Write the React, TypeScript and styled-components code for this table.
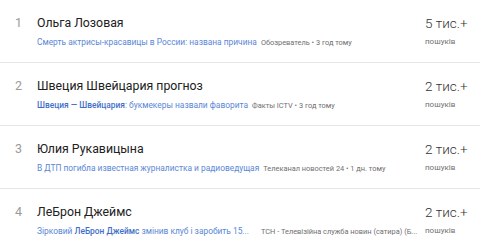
import { createGlobalStyle } from "styled-components";
import styled from "styled-components";

const GlobalStyle = createGlobalStyle`
  html, body {
    margin: 0;
    padding: 0;
    background: #ffffff;
  }
  body {
    font-family: Roboto, "Noto Sans", Arial, sans-serif;
    -webkit-font-smoothing: antialiased;
  }
`;

type Part = { text: string; bold?: boolean };

type Trend = {
  rank: number;
  title: string;
  snippet: Part[];
  source: string;
  count: string;
};

const trends: Trend[] = [
  {
    rank: 1,
    title: "Ольга Лозовая",
    snippet: [{ text: "Смерть актрисы-красавицы в России: названа причина" }],
    source: "Обозреватель • 3 год тому",
    count: "5 тис.+",
  },
  {
    rank: 2,
    title: "Швеция Швейцария прогноз",
    snippet: [
      { text: "Швеция — Швейцария", bold: true },
      { text: ": букмекеры назвали фаворита" },
    ],
    source: "Факты ICTV • 3 год тому",
    count: "2 тис.+",
  },
  {
    rank: 3,
    title: "Юлия Рукавицына",
    snippet: [{ text: "В ДТП погибла известная журналистка и радиоведущая" }],
    source: "Телеканал новостей 24 • 1 дн. тому",
    count: "2 тис.+",
  },
  {
    rank: 4,
    title: "ЛеБрон Джеймс",
    snippet: [
      { text: "Зірковий " },
      { text: "ЛеБрон Джеймс", bold: true },
      { text: " змінив клуб і заробить 15..." },
    ],
    source: "ТСН - Телевізійна служба новин (сатира) (Б...",
    count: "2 тис.+",
  },
];

const List = styled.div`
  display: flex;
  flex-direction: column;
  width: 480px;
`;

const Row = styled.div`
  display: flex;
  align-items: flex-start;
  height: 62px;
  border-bottom: 1px solid #e6e6e6;
  box-sizing: content-box;
`;

const Rank = styled.div`
  width: 22px;
  padding-left: 15px;
  padding-top: 14px;
  font-size: 12.5px;
  line-height: 18px;
  color: #9a9a9a;
  flex-shrink: 0;
`;

const Main = styled.div`
  flex: 1;
  min-width: 0;
  padding-top: 14px;
  padding-right: 2px;
  display: flex;
  flex-direction: column;
`;

const Title = styled.div`
  font-size: 12.3px;
  line-height: 18px;
  color: #212121;
`;

const SubLine = styled.div<{ $wide?: boolean }>`
  display: flex;
  align-items: baseline;
  gap: ${(p) => (p.$wide ? "12px" : "4px")};
  margin-top: 3px;
  line-height: 14px;
  white-space: nowrap;
  min-width: 0;
`;

const Snippet = styled.span`
  font-size: 8.4px;
  color: #5a87d6;
  flex-shrink: 0;
`;

const Strong = styled.b`
  font-weight: 500;
  color: #3f6fc8;
`;

const Source = styled.span`
  font-size: 7.4px;
  color: #6f6f6f;
  min-width: 0;
`;

const Volume = styled.div`
  width: 55px;
  flex-shrink: 0;
  padding-top: 13px;
  display: flex;
  flex-direction: column;
`;

const Count = styled.div`
  font-size: 13.5px;
  line-height: 20px;
  font-weight: 300;
  color: #333333;
`;

const Caption = styled.div`
  font-size: 8px;
  line-height: 12px;
  margin-top: 3px;
  color: #6f6f6f;
`;

export default function App() {
  return (
    <>
      <GlobalStyle />
      <List>
        {trends.map((t) => (
          <Row key={t.rank}>
            <Rank>{t.rank}</Rank>
            <Main>
              <Title>{t.title}</Title>
              <SubLine $wide={t.rank === 4}>
                <Snippet>
                  {t.snippet.map((p, i) =>
                    p.bold ? <Strong key={i}>{p.text}</Strong> : <span key={i}>{p.text}</span>
                  )}
                </Snippet>
                <Source>{t.source}</Source>
              </SubLine>
            </Main>
            <Volume>
              <Count>{t.count}</Count>
              <Caption>пошуків</Caption>
            </Volume>
          </Row>
        ))}
      </List>
    </>
  );
}
